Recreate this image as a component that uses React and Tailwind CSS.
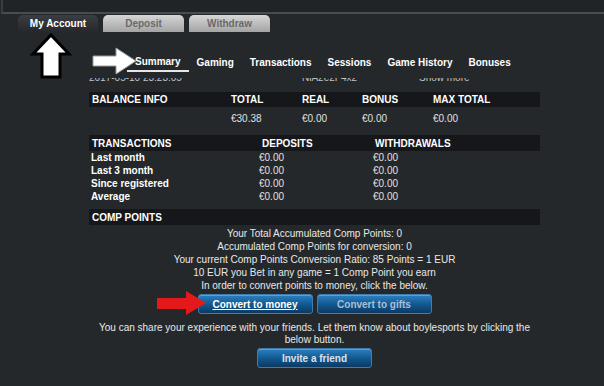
import React from 'react'

const font = { fontFamily: '"Liberation Sans", Arial, sans-serif' }
const btn = "h-[20px] w-[115px] rounded-[3px] border border-[#3d7db0] bg-gradient-to-b from-[#2d80c2] via-[#125a93] to-[#0c3a63] text-[10px] font-bold shadow-[inset_0_1px_0_rgba(255,255,255,0.25)]"

const subnav = ['Summary', 'Gaming', 'Transactions', 'Sessions', 'Game History', 'Bonuses']

export default function App() {
  return (
    <div style={font} className="relative w-[604px] h-[386px] overflow-hidden bg-[#24282b] text-[#e8e8e8]">
      {/* top frame */}
      <div className="h-[14px] border-b-2 border-[#484c50] bg-[#212427] border-l-2 ml-[1px] border-l-[#3a3e42]" />

      {/* main tabs */}
      <div className="flex gap-[5px] pl-[18px] pt-[1px]">
        <div className="w-[80px] h-[17px] rounded-t-[5px] bg-gradient-to-b from-[#3a3d42] to-[#26282c] text-white text-[10px] font-bold flex items-center justify-center">My Account</div>
        <div className="w-[81px] h-[17px] rounded-t-[5px] bg-gradient-to-b from-[#d6d6d6] to-[#a4a4a4] text-[#6a6a6a] text-[10px] font-bold flex items-center justify-center">Deposit</div>
        <div className="w-[81px] h-[17px] rounded-t-[5px] bg-gradient-to-b from-[#d6d6d6] to-[#a4a4a4] text-[#6a6a6a] text-[10px] font-bold flex items-center justify-center">Withdraw</div>
      </div>

      {/* sub nav */}
      <div className="flex pl-[127px] mt-[21px] h-[19px]">
        {subnav.map((s, i) => (
          <div key={s} className={`px-[8px] text-[10px] font-bold text-white flex items-center ${i === 0 ? 'border-b-2 border-[#e6e6e6]' : ''}`}>{s}</div>
        ))}
      </div>

      <div className="ml-[89px] w-[451px]">
        {/* clipped previous row of the scrolled list */}
        <div className="h-[4px] mt-[6px] overflow-hidden text-[10px] text-[#bfc3c6] flex">
          <div className="-mt-[8px] w-[213px]">2017-05-10 23:23:05</div>
          <div className="-mt-[8px] w-[117px]">NiA2e2F4x2</div>
          <div className="-mt-[8px] underline">Show more</div>
        </div>

        {/* balance */}
        <div className="mt-[10px] h-[15px] bg-[#15171a] flex items-center pl-[3px] text-[10px] font-bold text-white">
          <div className="w-[139px]">BALANCE INFO</div>
          <div className="w-[71px]">TOTAL</div>
          <div className="w-[60px]">REAL</div>
          <div className="w-[71px]">BONUS</div>
          <div>MAX TOTAL</div>
        </div>
        <div className="h-[19px] flex items-center pl-[142px] text-[10px] text-[#e0e0e0] mt-[2px]">
          <div className="w-[71px]">€30.38</div>
          <div className="w-[60px]">€0.00</div>
          <div className="w-[71px]">€0.00</div>
          <div>€0.00</div>
        </div>

        {/* transactions */}
        <div className="mt-[7px] h-[16px] bg-[#15171a] flex items-center pl-[3px] text-[10px] font-bold text-white">
          <div className="w-[170px]">TRANSACTIONS</div>
          <div className="w-[113px]">DEPOSITS</div>
          <div>WITHDRAWALS</div>
        </div>
        {['Last month', 'Last 3 month', 'Since registered', 'Average'].map(l => (
          <div key={l} className="h-[13px] flex items-center pl-[2px] text-[10px]">
            <div className="w-[168px] font-bold text-white">{l}</div>
            <div className="w-[114px] text-[#e0e0e0]">€0.00</div>
            <div className="text-[#e0e0e0]">€0.00</div>
          </div>
        ))}

        {/* comp points */}
        <div className="mt-[6px] h-[16px] bg-[#15171a] flex items-center pl-[3px] text-[10px] font-bold text-white">COMP POINTS</div>
        <div className="mt-[2px] flex flex-col items-center text-[10px] leading-[13px] text-[#e8e8e8]">
          <div>Your Total Accumulated Comp Points: 0</div>
          <div>Accumulated Comp Points for conversion: 0</div>
          <div>Your current Comp Points Conversion Ratio: 85 Points = 1 EUR</div>
          <div>10 EUR you Bet in any game = 1 Comp Point you earn</div>
          <div>In order to convert points to money, click the below.</div>
          <div className="flex gap-[4px] mt-[2px]">
            <button className={`${btn} text-white underline`}>Convert to money</button>
            <button className={`${btn} text-[#a9bfd6]`}>Convert to gifts</button>
          </div>
          <div className="mt-[8px] w-[440px] text-center leading-[12px]">You can share your experience with your friends. Let them know about boylesports by clicking the below button.</div>
          <button className={`${btn} mt-[2px] text-[#d9e3ee]`}>Invite a friend</button>
        </div>
      </div>

      {/* annotation arrows */}
      <svg className="absolute left-0 top-0 pointer-events-none" width="604" height="386">
        <polygon points="51,35 69,54 60,54 60,77 42,77 42,54 33,54" fill="#fff" stroke="#000" strokeWidth="3" strokeLinejoin="miter" />
        <polygon points="93,56 116,56 116,48 136,61 116,74 116,66 93,66" fill="#fff" stroke="#9a9a9a" strokeWidth="1" />
        <polygon points="157,298 186,298 186,291 206,303 186,315 186,309 157,309" fill="#e3191c" />
      </svg>
    </div>
  )
}
